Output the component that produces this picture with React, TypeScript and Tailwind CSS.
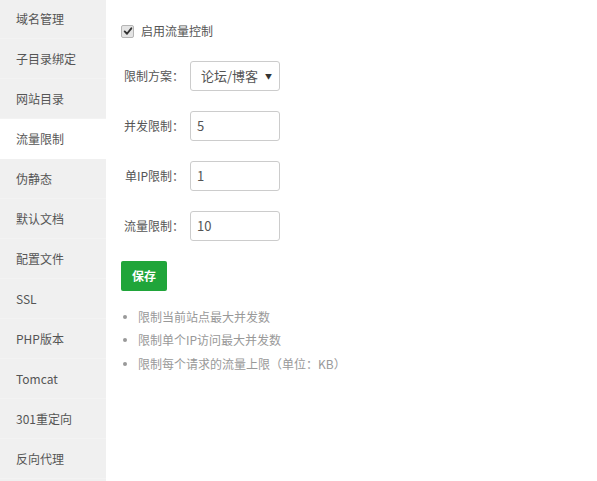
import React from 'react';

const menu = ['域名管理', '子目录绑定', '网站目录', '流量限制', '伪静态', '默认文档', '配置文件', 'SSL', 'PHP版本', 'Tomcat', '301重定向', '反向代理'];

const fields = [
  { label: '并发限制：', value: '5' },
  { label: '单IP限制：', value: '1' },
  { label: '流量限制：', value: '10' },
];

const tips = ['限制当前站点最大并发数', '限制单个IP访问最大并发数', '限制每个请求的流量上限（单位：KB）'];

export default function App() {
  return (
    <div
      className="flex w-[597px] h-[481px] overflow-hidden bg-white text-[12px] text-[#555]"
      style={{ fontFamily: '"Microsoft YaHei", "Noto Sans CJK SC", "Noto Sans", sans-serif' }}
    >
      {/* left tabs */}
      <div className="w-[106px] shrink-0 bg-[#f0f0f0] mt-[-1px]">
        {menu.map((item, i) => (
          <div
            key={item}
            className={`h-[40px] leading-[40px] pl-[16px] ${i === 3 ? 'bg-white' : 'border-b border-[#f3f3f3]'}`}
          >
            {item}
          </div>
        ))}
      </div>

      {/* content */}
      <div className="flex-1 pl-[15px] pt-[25px]">
        <label className="flex items-center h-[12px]">
          <span className="w-[13px] h-[13px] rounded-[2px] border border-[#b5b5b5] bg-[#e4e4e4] flex items-center justify-center">
            <svg viewBox="0 0 12 12" className="w-[10px] h-[10px]">
              <path d="M2 6.5 L4.8 9.3 L10 2.8" fill="none" stroke="#333" strokeWidth="2.2" strokeLinecap="round" strokeLinejoin="round" />
            </svg>
          </span>
          <span className="ml-[7px]">启用流量控制</span>
        </label>

        <div className="flex items-center h-[30px] mt-[24px]">
          <span className="w-[63px] text-right">限制方案：</span>
          <div className="ml-[6px] w-[90px] h-[30px] border border-[#ccc] rounded-[3px] flex items-center justify-between pl-[10px] pr-[7px] text-[13px]">
            <span>论坛/博客</span>
            <span className="text-[7px] text-[#333]">▼</span>
          </div>
        </div>

        {fields.map((f) => (
          <div key={f.label} className="flex items-center h-[30px] mt-[20px]">
            <span className="w-[63px] text-right">{f.label}</span>
            <div className="ml-[6px] w-[90px] h-[30px] border border-[#ccc] rounded-[3px] flex items-center pl-[6px] text-[13px]">
              {f.value}
            </div>
          </div>
        ))}

        <button className="mt-[20px] w-[46px] h-[30px] rounded-[2px] bg-[#20a53a] text-white font-bold text-[12px]">
          保存
        </button>

        <ul className="mt-[14px] text-[#999]">
          {tips.map((t) => (
            <li key={t} className="flex items-center h-[23.5px]">
              <span className="w-[4px] h-[4px] rounded-full bg-[#999] ml-[2px] mr-[11px]" />
              {t}
            </li>
          ))}
        </ul>
      </div>
    </div>
  );
}
